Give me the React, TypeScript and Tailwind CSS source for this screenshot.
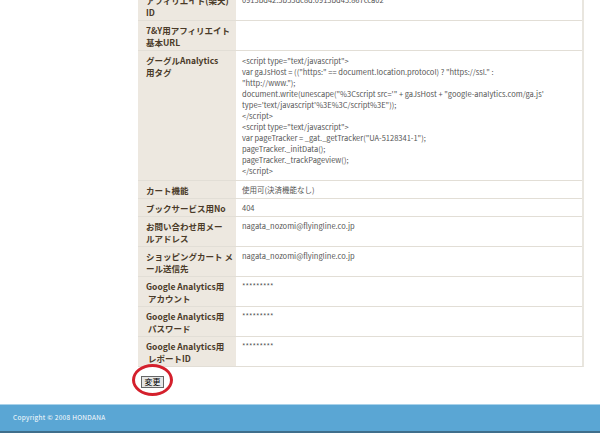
import React from "react";

const font = { fontFamily: '"Noto Sans CJK JP", "Noto Sans", sans-serif' };

type Row = { label: React.ReactNode; value: React.ReactNode; code?: boolean };

const gaLines = [
  '<script type="text/javascript">',
  'var gaJsHost = (("https:" == document.location.protocol) ? "https://ssl." :',
  '"http://www.");',
  "document.write(unescape(\"%3Cscript src='\" + gaJsHost + \"google-analytics.com/ga.js'",
  "type='text/javascript'%3E%3C/script%3E\"));",
  "</script>",
  '<script type="text/javascript">',
  'var pageTracker = _gat._getTracker("UA-5128341-1");',
  "pageTracker._initData();",
  "pageTracker._trackPageview();",
  "</script>",
];

const rows: Row[] = [
  {
    label: (
      <>
        アフィリエイト(楽天)
        <br />
        ID
      </>
    ),
    value: "0913bd42.5b53dc8d.0913bd43.867cca02",
  },
  {
    label: (
      <>
        7&amp;Y用アフィリエイト
        <br />
        基本URL
      </>
    ),
    value: "",
  },
  {
    label: (
      <>
        グーグルAnalytics
        <br />
        用タグ
      </>
    ),
    code: true,
    value: (
      <>
        {gaLines.map((l, i) => (
          <div key={i} className="whitespace-pre h-[11px]">
            {l}
          </div>
        ))}
      </>
    ),
  },
  { label: "カート機能", value: "使用可(決済機能なし)" },
  { label: "ブックサービス用No", value: "404" },
  {
    label: (
      <>
        お問い合わせ用メー
        <br />
        ルアドレス
      </>
    ),
    value: "nagata_nozomi@flyingline.co.jp",
  },
  {
    label: (
      <>
        ショッピングカート メ
        <br />
        ール送信先
      </>
    ),
    value: "nagata_nozomi@flyingline.co.jp",
  },
  {
    label: (
      <>
        Google Analytics用
        <br />
        {"\u00a0アカウント"}
      </>
    ),
    value: "*********",
  },
  {
    label: (
      <>
        Google Analytics用
        <br />
        {"\u00a0パスワード"}
      </>
    ),
    value: "*********",
  },
  {
    label: (
      <>
        Google Analytics用
        <br />
        {"\u00a0レポートID"}
      </>
    ),
    value: "*********",
  },
];

export default function App() {
  return (
    <div
      className="w-[600px] h-[433px] overflow-hidden bg-white flex flex-col"
      style={font}
    >
      <div className="pl-[138px] mt-[-10px]">
        <div className="w-[446px] flex flex-col border-r-2 border-[#e9e6df] border-b border-b-[#e2ded6]">
          {rows.map((r, i) => (
            <div key={i} className="flex border-t border-[#e2ded6]">
              <div className="w-[98px] shrink-0 bg-[#ede8e0] pl-[8px] pr-[2px] pt-[3px] pb-[2px] text-[8.5px] leading-[12px] font-bold text-[#4a3a28] whitespace-nowrap">
                {r.label}
              </div>
              <div
                className={
                  r.code
                    ? "flex-1 bg-white pl-[6px] pt-[4px] pb-[4px] text-[7.5px] leading-[11px] text-[#555] whitespace-nowrap overflow-hidden"
                    : "flex-1 bg-white pl-[6px] pt-[3px] pb-[2px] text-[7.5px] leading-[12px] text-[#555] whitespace-nowrap overflow-hidden"
                }
              >
                {r.value}
              </div>
            </div>
          ))}
        </div>
        <div className="relative mt-[9px] ml-[3px] w-[23px]">
          <div className="w-[23px] h-[12px] border border-[#666] bg-[#e6e6e6] flex items-center justify-center text-[8px] leading-none text-black">
            変更
          </div>
          <div className="absolute left-[-9px] top-[-12px] w-[41px] h-[32px] rounded-[50%] border-[3px] border-[#d4202c]" />
        </div>
      </div>
      <div className="mt-auto flex flex-col">
        <div className="h-[1px] bg-[#a9d2ea]" />
        <div className="h-[26px] bg-[#5aa6d4] flex items-center pl-[13px] text-[6.5px] text-white tracking-[0.3px]">
          Copyright © 2008 HONDANA
        </div>
        <div className="h-[2px] bg-[#3f6f8c]" />
      </div>
    </div>
  );
}
